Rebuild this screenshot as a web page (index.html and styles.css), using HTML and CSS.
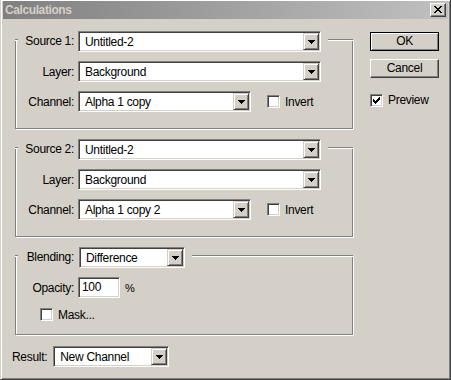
FILE: index.html
```html
<!DOCTYPE html>
<html lang="en">
<head>
    <meta charset="UTF-8">
    <title>Calculations</title>
    <link rel="stylesheet" href="styles.css">
</head>
<body>
    <div class="win">
        <div class="titlebar">
            <span class="title">Calculations</span>
            <span class="close">
                <svg width="8" height="7" viewBox="0 0 8 7"><path d="M0 0h2v1H0zM6 0h2v1H6zM1 1h2v1H1zM5 1h2v1H5zM2 2h4v1H2zM3 3h2v1H3zM2 4h4v1H2zM1 5h2v1H1zM5 5h2v1H5zM0 6h2v1H0zM6 6h2v1H6z"/></svg>
            </span>
        </div>

        <div class="content">
            <div class="main">
                <!-- source 1 -->
                <div class="group">
                    <div class="group-head">
                        <span class="seg"></span>
                        <span class="lbl lbl-head">Source 1:</span>
                        <div class="combo w-wide">
                            <span class="combo-text">Untitled-2</span>
                            <span class="drop"><svg width="7" height="4"><path d="M0 0h7v1H0zM1 1h5v1H1zM2 2h3v1H2zM3 3h1v1H3z"/></svg></span>
                        </div>
                        <span class="seg seg-fill"></span>
                    </div>
                    <div class="group-body">
                        <div class="row">
                            <span class="lbl">Layer:</span>
                            <div class="combo w-wide">
                                <span class="combo-text">Background</span>
                                <span class="drop"><svg width="7" height="4"><path d="M0 0h7v1H0zM1 1h5v1H1zM2 2h3v1H2zM3 3h1v1H3z"/></svg></span>
                            </div>
                        </div>
                        <div class="row">
                            <span class="lbl">Channel:</span>
                            <div class="combo w-mid">
                                <span class="combo-text">Alpha 1 copy</span>
                                <span class="drop"><svg width="7" height="4"><path d="M0 0h7v1H0zM1 1h5v1H1zM2 2h3v1H2zM3 3h1v1H3z"/></svg></span>
                            </div>
                            <span class="check check-invert"></span>
                            <span class="check-lbl">Invert</span>
                        </div>
                    </div>
                </div>

                <!-- source 2 -->
                <div class="group">
                    <div class="group-head">
                        <span class="seg"></span>
                        <span class="lbl lbl-head">Source 2:</span>
                        <div class="combo w-wide">
                            <span class="combo-text">Untitled-2</span>
                            <span class="drop"><svg width="7" height="4"><path d="M0 0h7v1H0zM1 1h5v1H1zM2 2h3v1H2zM3 3h1v1H3z"/></svg></span>
                        </div>
                        <span class="seg seg-fill"></span>
                    </div>
                    <div class="group-body">
                        <div class="row">
                            <span class="lbl">Layer:</span>
                            <div class="combo w-wide">
                                <span class="combo-text">Background</span>
                                <span class="drop"><svg width="7" height="4"><path d="M0 0h7v1H0zM1 1h5v1H1zM2 2h3v1H2zM3 3h1v1H3z"/></svg></span>
                            </div>
                        </div>
                        <div class="row">
                            <span class="lbl">Channel:</span>
                            <div class="combo w-mid">
                                <span class="combo-text">Alpha 1 copy 2</span>
                                <span class="drop"><svg width="7" height="4"><path d="M0 0h7v1H0zM1 1h5v1H1zM2 2h3v1H2zM3 3h1v1H3z"/></svg></span>
                            </div>
                            <span class="check check-invert"></span>
                            <span class="check-lbl">Invert</span>
                        </div>
                    </div>
                </div>

                <!-- blending -->
                <div class="group">
                    <div class="group-head">
                        <span class="seg"></span>
                        <span class="lbl lbl-head lbl-blend">Blending:</span>
                        <div class="combo w-blend">
                            <span class="combo-text">Difference</span>
                            <span class="drop"><svg width="7" height="4"><path d="M0 0h7v1H0zM1 1h5v1H1zM2 2h3v1H2zM3 3h1v1H3z"/></svg></span>
                        </div>
                        <span class="seg seg-fill"></span>
                    </div>
                    <div class="group-body body-blend">
                        <div class="row">
                            <span class="lbl lbl-opacity">Opacity:</span>
                            <div class="field">100</div>
                            <span class="unit">%</span>
                        </div>
                        <div class="row row-mask">
                            <span class="check check-mask"></span>
                            <span class="check-lbl">Mask...</span>
                        </div>
                    </div>
                </div>

                <div class="result">
                    <span class="result-lbl">Result:</span>
                    <div class="combo w-result">
                        <span class="combo-text">New Channel</span>
                        <span class="drop"><svg width="7" height="4"><path d="M0 0h7v1H0zM1 1h5v1H1zM2 2h3v1H2zM3 3h1v1H3z"/></svg></span>
                    </div>
                </div>
            </div>

            <div class="side">
                <div class="btn btn-default">OK</div>
                <div class="btn">Cancel</div>
                <div class="preview">
                    <span class="check">
                        <svg width="7" height="7" viewBox="0 0 7 7"><path d="M6 0h1v1H6zM5 1h2v1H5zM0 2h1v1H0zM4 2h3v1H4zM0 3h2v1H0zM3 3h3v1H3zM0 4h5v1H0zM1 5h3v1H1zM2 6h1v1H2z"/></svg>
                    </span>
                    <span class="check-lbl">Preview</span>
                </div>
            </div>
        </div>
    </div>
</body>
</html>
```

FILE: styles.css
```css
html, body {
    margin: 0;
    padding: 0;
}

body {
    background: #d4d0c8;
    font-family: 'Liberation Sans', Arial, sans-serif;
    font-size: 12px;
    letter-spacing: -0.3px;
    color: #000;
}

.win {
    width: 451px;
    height: 380px;
    box-sizing: border-box;
    border-style: solid;
    border-width: 0 1px 1px 1px;
    border-color: #d4d0c8 #404040 #404040 #d4d0c8;
    box-shadow: inset 1px 1px #fff, inset -1px -1px #808080;
    padding: 1px 2px 2px 2px;
}

/* title bar */
.titlebar {
    height: 18px;
    display: flex;
    align-items: center;
    background: linear-gradient(to right, #808080, #c0c0c0);
}

.title {
    flex: 1;
    padding-left: 2px;
    font-weight: bold;
    letter-spacing: -0.4px;
    color: #d4d0c8;
}

.close {
    width: 16px;
    height: 14px;
    margin-right: 2px;
    box-sizing: border-box;
    border: 1px solid;
    border-color: #fff #404040 #404040 #fff;
    box-shadow: inset -1px -1px #808080;
    background: #d4d0c8;
    display: flex;
    align-items: center;
    justify-content: center;
}

.close svg {
    margin: 0 1px 1px 0;
}

/* layout */
.content {
    display: flex;
    padding-top: 12px;
}

.main {
    width: 338px;
    margin-left: 12px;
}

.side {
    margin-left: 17px;
    width: 69px;
}

/* group boxes */
.group {
    margin-bottom: 10px;
}

.group-head {
    display: flex;
    align-items: flex-start;
    height: 21px;
}

.seg {
    width: 3px;
    margin-top: 8px;
    height: 0;
    border-top: 1px solid #808080;
    border-bottom: 1px solid #fff;
}

.seg-fill {
    flex: 1;
    margin-left: 7px;
}

.group-body {
    margin-top: -13px;
    padding: 22px 0 16px 0;
    border: 1px solid #808080;
    border-top: none;
    box-shadow: inset 1px 0 #fff, 1px 1px #fff;
}

.body-blend {
    padding-bottom: 13px;
}

.row {
    display: flex;
    align-items: center;
    height: 21px;
    margin-bottom: 9px;
}

.row:last-child {
    margin-bottom: 0;
}

.lbl {
    width: 58px;
    margin-right: 4px;
    text-align: right;
    white-space: nowrap;
}

.lbl-head {
    width: 56px;
    line-height: 21px;
}

.lbl-blend {
    margin-right: 5px;
}

/* combo boxes */
.combo {
    display: flex;
    align-items: center;
    height: 21px;
    box-sizing: border-box;
    padding: 1px;
    border: 1px solid;
    border-color: #808080 #fff #fff #808080;
    box-shadow: inset 1px 1px #404040, inset -1px -1px #d4d0c8;
    background: #fff;
}

.combo-text {
    flex: 1;
    padding-left: 5px;
    white-space: nowrap;
}

.drop {
    width: 16px;
    height: 17px;
    box-sizing: border-box;
    border: 1px solid;
    border-color: #d4d0c8 #404040 #404040 #d4d0c8;
    box-shadow: inset 1px 1px #fff, inset -1px -1px #808080;
    background: #d4d0c8;
    display: flex;
    align-items: center;
    justify-content: center;
}

.drop svg {
    margin-top: 1px;
}

.w-wide { width: 243px; }
.w-mid { width: 173px; }
.w-blend { width: 106px; }
.w-result { width: 116px; }

/* text field */
.field {
    width: 42px;
    height: 21px;
    box-sizing: border-box;
    padding: 1px 0 0 3px;
    border: 1px solid;
    border-color: #808080 #fff #fff #808080;
    box-shadow: inset 1px 1px #404040, inset -1px -1px #d4d0c8;
    background: #fff;
    line-height: 17px;
}

.unit {
    margin-left: 5px;
    font-size: 11px;
}

/* checkboxes */
.check {
    width: 13px;
    height: 13px;
    box-sizing: border-box;
    border: 1px solid;
    border-color: #808080 #fff #fff #808080;
    box-shadow: inset 1px 1px #404040, inset -1px -1px #d4d0c8;
    background: #fff;
    display: flex;
    align-items: center;
    justify-content: center;
}

.check-lbl {
    margin-left: 5px;
}

.check-invert {
    margin-left: 16px;
}

.row-mask {
    height: 13px;
    margin-top: 10px;
}

.check-mask {
    margin-left: 24px;
}

/* result */
.result {
    display: flex;
    align-items: center;
    margin-top: 11px;
    margin-left: -3px;
}

.result-lbl {
    margin-right: 6px;
}

/* buttons */
.btn {
    height: 19px;
    box-sizing: border-box;
    border: 1px solid;
    border-color: #fff #404040 #404040 #fff;
    box-shadow: inset -1px -1px #808080;
    text-align: center;
    line-height: 17px;
    margin-top: 8px;
}

.btn-default {
    margin-top: 1px;
    border-color: #000;
    box-shadow: inset 1px 1px #fff, inset -1px -1px #808080;
}

.preview {
    display: flex;
    align-items: center;
    margin-top: 15px;
}
```
